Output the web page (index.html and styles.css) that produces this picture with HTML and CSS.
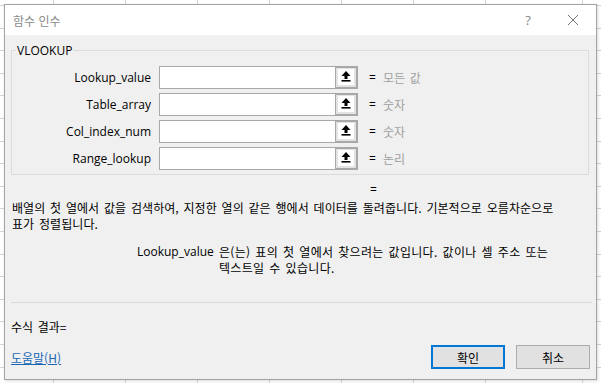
FILE: index.html
```html
<!DOCTYPE html>
<html lang="ko">
<head>
<meta charset="utf-8">
<title>함수 인수</title>
<link rel="stylesheet" href="styles.css">
</head>
<body>
<div class="sheet">
  <div class="dialog">
    <div class="titlebar">
      <span class="title">함수 인수</span>
      <span class="help-btn">?</span>
      <span class="close-btn">
        <svg width="12" height="12" viewBox="0 0 12 12"><path d="M1 1 L11 11 M11 1 L1 11" stroke="#777" stroke-width="1" fill="none"/></svg>
      </span>
    </div>
    <div class="body">
      <fieldset class="group">
        <legend>VLOOKUP</legend>
        <div class="args">
          <div class="arg">
            <span class="arg-name">Lookup_value</span>
            <span class="field"><span class="field-input"></span><span class="collapse"><span class="collapse-inner"><svg width="16" height="16" viewBox="0 0 16 16"><path d="M8 2 L3.5 7 H6.5 V10 H9.5 V7 H12.5 Z" fill="#000"/><rect x="3.5" y="11" width="9" height="1.6" fill="#000"/></svg></span></span></span>
            <span class="eq">=</span><span class="arg-val">모든 값</span>
          </div>
          <div class="arg">
            <span class="arg-name">Table_array</span>
            <span class="field"><span class="field-input"></span><span class="collapse"><span class="collapse-inner"><svg width="16" height="16" viewBox="0 0 16 16"><path d="M8 2 L3.5 7 H6.5 V10 H9.5 V7 H12.5 Z" fill="#000"/><rect x="3.5" y="11" width="9" height="1.6" fill="#000"/></svg></span></span></span>
            <span class="eq">=</span><span class="arg-val">숫자</span>
          </div>
          <div class="arg">
            <span class="arg-name">Col_index_num</span>
            <span class="field"><span class="field-input"></span><span class="collapse"><span class="collapse-inner"><svg width="16" height="16" viewBox="0 0 16 16"><path d="M8 2 L3.5 7 H6.5 V10 H9.5 V7 H12.5 Z" fill="#000"/><rect x="3.5" y="11" width="9" height="1.6" fill="#000"/></svg></span></span></span>
            <span class="eq">=</span><span class="arg-val">숫자</span>
          </div>
          <div class="arg">
            <span class="arg-name">Range_lookup</span>
            <span class="field"><span class="field-input"></span><span class="collapse"><span class="collapse-inner"><svg width="16" height="16" viewBox="0 0 16 16"><path d="M8 2 L3.5 7 H6.5 V10 H9.5 V7 H12.5 Z" fill="#000"/><rect x="3.5" y="11" width="9" height="1.6" fill="#000"/></svg></span></span></span>
            <span class="eq">=</span><span class="arg-val">논리</span>
          </div>
        </div>
      </fieldset>
      <div class="result-eq">=</div>
      <p class="desc">배열의 첫 열에서 값을 검색하여, 지정한 열의 같은 행에서 데이터를 돌려줍니다. 기본적으로 오름차순으로<br>표가 정렬됩니다.</p>
      <div class="arg-help">
        <span class="arg-help-name">Lookup_value</span>
        <span class="arg-help-text">은(는) 표의 첫 열에서 찾으려는 값입니다. 값이나 셀 주소 또는<br>텍스트일 수 있습니다.</span>
      </div>
      <div class="sep"></div>
      <div class="formula">수식 결과=</div>
      <div class="footer">
        <a class="help-link" href="#">도움말(H)</a>
        <div class="buttons">
          <button class="btn btn-default">확인</button>
          <button class="btn">취소</button>
        </div>
      </div>
    </div>
  </div>
</div>
</body>
</html>
```
FILE: styles.css
```css
* { box-sizing: border-box; }
html, body { margin: 0; padding: 0; }
body {
  width: 601px;
  height: 383px;
  overflow: hidden;
  font-family: "Open Sans", "Noto Sans CJK KR", sans-serif;
  font-size: 12px;
  color: #000;
  background-color: #fff;
  background-image:
    repeating-linear-gradient(to right, transparent 0, transparent 53px, #d4d4d4 53px, #d4d4d4 54px, transparent 54px, transparent 72px),
    repeating-linear-gradient(to bottom, transparent 0, transparent 5px, #d4d4d4 5px, #d4d4d4 6px, transparent 6px, transparent 22.6px);
  background-position: -72px 0, 0 0;
}
.sheet { padding: 4px 0 0 4px; }
.dialog {
  width: 593px;
  height: 376px;
  border: 1px solid #a3a3a3;
  background: #f0f0f0;
  display: flex;
  flex-direction: column;
  box-shadow: 1px 1px 3px rgba(0,0,0,0.15);
}
.titlebar {
  height: 30px;
  background: #fff;
  display: flex;
  align-items: center;
  padding-left: 8px;
  flex: none;
}
.title {
  font-family: "Noto Sans CJK KR", sans-serif;
  color: #8a8a8a;
  font-size: 12px;
  flex: 1;
}
.help-btn {
  color: #888;
  font-size: 13px;
  width: 12px;
  margin-right: 33px;
  text-align: center;
}
.close-btn {
  width: 12px;
  height: 12px;
  margin-right: 17px;
  display: flex;
}
.body {
  flex: 1;
  padding: 0 6px 0 6px;
  display: flex;
  flex-direction: column;
}
.group {
  margin: 7px 1px 0 0;
  border: 1px solid #dcdcdc;
  padding: 0 0 4px 0;
  min-width: 0;
}
.group legend {
  font-size: 12px;
  line-height: 17px;
  padding: 0 1px;
  margin-left: 4px;
  color: #000;
}
.args {
  display: flex;
  flex-direction: column;
  gap: 4px;
  padding-top: 7px;
}
.arg {
  display: flex;
  align-items: center;
  height: 23px;
}
.arg-name {
  width: 139px;
  text-align: right;
  flex: none;
}
.field {
  margin-left: 8px;
  width: 199px;
  height: 23px;
  display: flex;
  border: 1px solid #a8a8a8;
  background: #fff;
  flex: none;
}
.field-input { flex: 1; }
.collapse {
  width: 22px;
  height: 21px;
  background: #a8a8a8;
  padding: 1px 1px 1px 1px;
  flex: none;
  margin-left: -1px;
}
.collapse-inner {
  display: flex;
  width: 20px;
  height: 19px;
  background: #e3e3e3;
  padding: 1px 2px 2px 2px;
}
.collapse-inner svg { background: #fff; display: block; }
.eq {
  margin-left: 11px;
  width: 14px;
}
.arg-val { color: #a0a0a0; font-family: "Noto Sans CJK KR", sans-serif; word-spacing: 1.3px; }
.result-eq {
  margin-top: 7px;
  padding-left: 359px;
  line-height: 16px;
}
.desc {
  margin: 2px 0 0 1px;
  line-height: 16px;
  white-space: nowrap;
  font-family: "Noto Sans CJK KR", sans-serif;
  word-spacing: 1.3px;
  letter-spacing: 0.07px;
}
.arg-help {
  display: flex;
  margin-top: 12px;
  line-height: 15.5px;
  padding-left: 126px;
}
.arg-help-name { width: 82px; flex: none; }
.arg-help-text {
  white-space: nowrap;
  font-family: "Noto Sans CJK KR", sans-serif;
  word-spacing: 1.3px;
  letter-spacing: 0.3px;
}
.sep {
  margin-top: 27px;
  height: 1px;
  background: #dadada;
  margin-right: -2px;
}
.formula {
  margin-top: 16px;
  line-height: 16px;
  font-family: "Noto Sans CJK KR", sans-serif;
  word-spacing: 1.3px;
}
.footer {
  margin-top: 10px;
  display: flex;
  align-items: center;
  justify-content: space-between;
}
.help-link {
  color: #1a67b5;
  text-decoration: underline;
  font-family: "Noto Sans CJK KR", sans-serif;
  margin-top: 1px;
}
.buttons { display: flex; gap: 11px; }
.btn {
  width: 74px;
  height: 24px;
  font-family: "Noto Sans CJK KR", sans-serif;
  font-size: 12px;
  background: #e1e1e1;
  border: 1px solid #adadad;
  color: #000;
  padding: 0;
}
.btn-default { border: 2px solid #0078d7; }
```
